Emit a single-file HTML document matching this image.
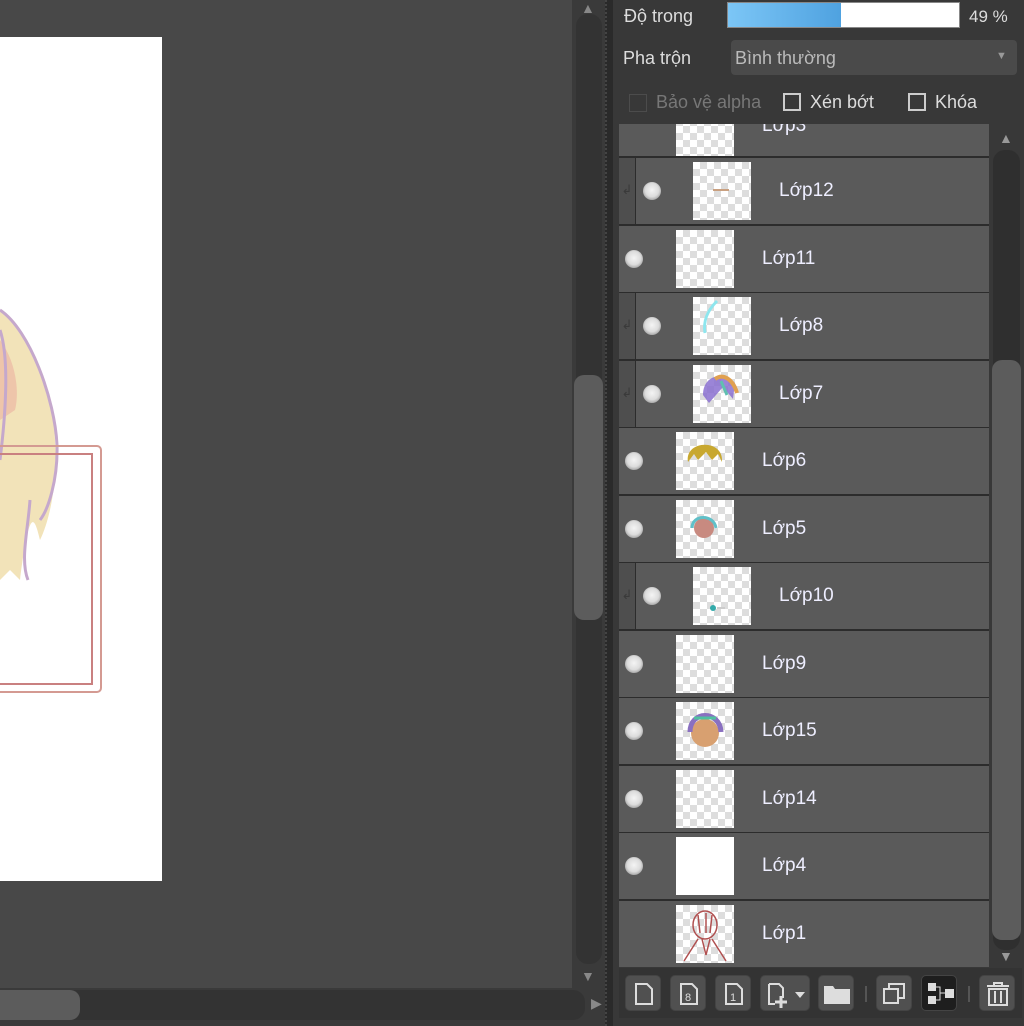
<!DOCTYPE html>
<html><head><meta charset="utf-8"><style>
*{margin:0;padding:0;box-sizing:border-box}
body{width:1024px;height:1026px;overflow:hidden;background:#2f2f2f;font-family:"Liberation Sans","DejaVu Sans",sans-serif;position:relative}
.a{position:absolute}
.row{position:absolute;left:619px;width:370px;height:66px;background:#5a5a5a}
.row .eye{position:absolute;left:7px;top:24px;width:18px;height:18px;border-radius:50%;background:radial-gradient(circle at 50% 45%,#f4f4f4 0,#dcdcdc 50%,#a0a0a0 78%,#5a5a5a 100%)}
.row .th{position:absolute;left:57px;top:4px;width:58px;height:58px;background-color:#fff;background-image:linear-gradient(45deg,#ddd 25%,transparent 25%,transparent 75%,#ddd 75%),linear-gradient(45deg,#ddd 25%,transparent 25%,transparent 75%,#ddd 75%);background-size:14px 14px;background-position:0 0,7px 7px}
.row .tx{position:absolute;left:143px;top:22px;color:#eef;font-size:19px}
.row.in{left:636px;width:353px}
.strip{position:absolute;left:619px;width:16px;height:66px;background:#4e4e4e;color:#3a3a3a;font-size:13px;text-align:center;padding-top:24px}
.btn{position:absolute;top:975px;width:36px;height:36px;border-radius:5px;background:#505050;border:1px solid #444}
</style></head><body>
<div class="a" style="left:0;top:0;width:572px;height:988px;background:#484848"></div>
<div class="a" style="left:0;top:37px;width:162px;height:844px;background:#fff"></div>
<svg class="a" style="left:0;top:280px" width="162" height="420">
<path d="M0 30 C30 50 55 120 55 160 C58 200 50 240 40 260 C35 240 30 220 20 300 L10 290 L0 300 Z" fill="#efdca8" opacity=".8"/>
<path d="M0 60 C15 80 20 110 15 130 L0 140 Z" fill="#ebb0a0" opacity=".6"/>
<path d="M0 30 C30 50 55 120 57 165 C58 200 48 230 40 240 M30 220 C28 250 20 280 28 300 M0 50 C10 80 5 140 0 180" stroke="#c5a8cc" stroke-width="3" fill="none"/>
<rect x="-5" y="166" width="106" height="246" rx="4" fill="none" stroke="#d49a92" stroke-width="2"/>
<rect x="-5" y="174" width="97" height="230" fill="none" stroke="#c98080" stroke-width="2"/>
</svg>
<div class="a" style="left:572px;top:0;width:33px;height:988px;background:#3a3a3a"></div>
<div class="a" style="left:576px;top:14px;width:26px;height:950px;background:#333;border-radius:12px"></div>
<div class="a" style="left:574px;top:375px;width:29px;height:245px;background:#5c5c5c;border-radius:10px"></div>
<div class="a" style="left:581px;top:0;color:#888;font-size:14px">▲</div>
<div class="a" style="left:581px;top:968px;color:#888;font-size:14px">▼</div>
<div class="a" style="left:0;top:988px;width:605px;height:38px;background:#3a3a3a"></div>
<div class="a" style="left:0;top:990px;width:585px;height:30px;background:#333;border-radius:12px"></div>
<div class="a" style="left:0;top:990px;width:80px;height:30px;background:#5c5c5c;border-radius:0 10px 10px 0"></div>
<div class="a" style="left:591px;top:995px;color:#888;font-size:14px">▶</div>
<div class="a" style="left:605px;top:0;width:8px;height:1026px;background:#2a2a2a;border-left:2px dotted #444"></div>
<div class="a" style="left:613px;top:0;width:411px;height:1026px;background:#383838"></div>
<div class="a" style="left:624px;top:6px;color:#ddd;font-size:18px">Độ trong</div>
<div class="a" style="left:727px;top:2px;width:233px;height:26px;background:#fff;border:1px solid #888"></div>
<div class="a" style="left:728px;top:3px;width:113px;height:24px;background:linear-gradient(90deg,#7cc6f6,#4fa2e0)"></div>
<div class="a" style="left:969px;top:7px;color:#ddd;font-size:17px">49 %</div>
<div class="a" style="left:623px;top:48px;color:#ddd;font-size:18px">Pha trộn</div>
<div class="a" style="left:731px;top:40px;width:286px;height:35px;background:#4a4a4a;border-radius:4px"></div>
<div class="a" style="left:735px;top:48px;color:#bbb;font-size:18px">Bình thường</div>
<div class="a" style="left:996px;top:50px;color:#999;font-size:11px">▼</div>
<div class="a" style="left:629px;top:94px;width:18px;height:18px;border:1px solid #4c4c4c"></div>
<div class="a" style="left:656px;top:92px;color:#777;font-size:18px">Bảo vệ alpha</div>
<div class="a" style="left:783px;top:93px;width:18px;height:18px;border:2px solid #ccc"></div>
<div class="a" style="left:810px;top:92px;color:#ddd;font-size:18px">Xén bớt</div>
<div class="a" style="left:908px;top:93px;width:18px;height:18px;border:2px solid #ccc"></div>
<div class="a" style="left:935px;top:92px;color:#ddd;font-size:18px">Khóa</div>
<div class="a" style="left:619px;top:124px;width:370px;height:842px;background:#2c2c2c"></div>
<div class="row" style="top:124px;height:32px;overflow:hidden"><div class="th" style="top:-26px"></div><div class="tx" style="top:-9px">Lớp3</div></div>
<div class="strip" style="top:158px">↲</div><div class="row in" style="top:158px"><div class="eye"></div><div class="th"><svg width="58" height="58"><path d="M20 28 H36" stroke="#c9a080" stroke-width="2"/></svg></div><div class="tx">Lớp12</div></div>
<div class="row" style="top:225.5px"><div class="eye" style="left:6px"></div><div class="th"></div><div class="tx">Lớp11</div></div>
<div class="strip" style="top:293px">↲</div><div class="row in" style="top:293px"><div class="eye"></div><div class="th"><svg width="58" height="58"><path d="M24 4 C14 14 10 24 12 36" stroke="#8ee6ee" stroke-width="3" fill="none"/></svg></div><div class="tx">Lớp8</div></div>
<div class="strip" style="top:360.5px">↲</div><div class="row in" style="top:360.5px"><div class="eye"></div><div class="th"><svg width="58" height="58"><path d="M10 30 C10 10 30 6 42 18 L40 34 L30 22 L16 38 Z" fill="#8a70d0" opacity=".85"/><path d="M22 14 C30 8 40 14 44 28" stroke="#e0a050" stroke-width="4" fill="none"/><path d="M28 16 L34 30" stroke="#60c0b0" stroke-width="3"/></svg></div><div class="tx">Lớp7</div></div>
<div class="row" style="top:428px"><div class="eye" style="left:6px"></div><div class="th"><svg width="58" height="58"><path d="M12 30 C8 8 48 6 46 30 L42 22 L36 28 L30 20 L22 28 L18 22 Z" fill="#c8a830"/></svg></div><div class="tx">Lớp6</div></div>
<div class="row" style="top:495.5px"><div class="eye" style="left:6px"></div><div class="th"><svg width="58" height="58"><circle cx="28" cy="28" r="10" fill="#c88a80"/><path d="M16 28 C16 14 38 14 40 28" stroke="#60c0c8" stroke-width="3" fill="none"/></svg></div><div class="tx">Lớp5</div></div>
<div class="strip" style="top:563px">↲</div><div class="row in" style="top:563px"><div class="eye"></div><div class="th"><svg width="58" height="58"><circle cx="20" cy="41" r="3" fill="#3aa"/><path d="M24 41 H32" stroke="#ccc" stroke-width="2"/></svg></div><div class="tx">Lớp10</div></div>
<div class="row" style="top:630.5px"><div class="eye" style="left:6px"></div><div class="th"></div><div class="tx">Lớp9</div></div>
<div class="row" style="top:698px"><div class="eye" style="left:6px"></div><div class="th"><svg width="58" height="58"><circle cx="29" cy="31" r="14" fill="#d8a070"/><path d="M14 30 C14 8 44 8 45 30" stroke="#8a70c0" stroke-width="5" fill="none"/><path d="M18 16 L40 16" stroke="#50c0a0" stroke-width="3"/></svg></div><div class="tx">Lớp15</div></div>
<div class="row" style="top:765.5px"><div class="eye" style="left:6px"></div><div class="th"></div><div class="tx">Lớp14</div></div>
<div class="row" style="top:833px"><div class="eye" style="left:6px"></div><div class="th" style="background:#fff"></div><div class="tx">Lớp4</div></div>
<div class="row" style="top:900.5px"><div class="th"><svg width="58" height="58"><g stroke="#b05050" fill="none" stroke-width="1.5"><ellipse cx="29" cy="20" rx="12" ry="14"/><path d="M22 10 L24 28 M30 8 L30 28 M36 10 L34 28 M22 34 L8 56 M36 34 L50 56 M26 34 L30 50 L34 34"/></g></svg></div><div class="tx">Lớp1</div></div>
<div class="a" style="left:990px;top:124px;width:32px;height:842px;background:#383838"></div>
<div class="a" style="left:993px;top:150px;width:27px;height:800px;background:#2f2f2f;border-radius:12px"></div>
<div class="a" style="left:992px;top:360px;width:29px;height:580px;background:#5c5c5c;border-radius:10px"></div>
<div class="a" style="left:999px;top:130px;color:#999;font-size:14px">▲</div>
<div class="a" style="left:999px;top:948px;color:#999;font-size:14px">▼</div>
<div class="a" style="left:619px;top:968px;width:403px;height:50px;background:#333"></div>
<div class="btn" style="left:625px"><svg width="36" height="36"><path d="M10 8 H21 L26 13 V28 H10 Z" fill="none" stroke="#ddd" stroke-width="2"/></svg></div>
<div class="btn" style="left:670px"><svg width="36" height="36"><path d="M10 8 H21 L26 13 V28 H10 Z" fill="none" stroke="#ddd" stroke-width="2"/><text x="14" y="25" font-size="11" fill="#ddd" font-family="Liberation Sans">8</text></svg></div>
<div class="btn" style="left:715px"><svg width="36" height="36"><path d="M10 8 H21 L26 13 V28 H10 Z" fill="none" stroke="#ddd" stroke-width="2"/><text x="14" y="25" font-size="11" fill="#ddd" font-family="Liberation Sans">1</text></svg></div>
<div class="btn" style="left:760px;width:50px"><svg width="50" height="36"><path d="M8 8 H18 L22 12 V22 M8 8 V28 H14" fill="none" stroke="#ddd" stroke-width="2"/><path d="M20 20 V32 M14 26 H26" stroke="#ddd" stroke-width="3"/><path d="M34 16 H44 L39 22 Z" fill="#ddd"/></svg></div>
<div class="btn" style="left:818px"><svg width="36" height="36"><path d="M5 10 H14 L16 13 H31 V28 H5 Z" fill="#ddd"/></svg></div>
<div class="a" style="left:865px;top:986px;width:2px;height:16px;background:#555"></div>
<div class="btn" style="left:876px"><svg width="36" height="36"><rect x="7" y="13" width="14" height="14" fill="none" stroke="#ddd" stroke-width="2"/><path d="M12 13 V8 H27 V22 H21" fill="none" stroke="#ddd" stroke-width="2"/></svg></div>
<div class="btn" style="left:921px;background:#1e1e1e"><svg width="36" height="36"><rect x="6" y="7" width="8" height="8" fill="#ddd"/><rect x="6" y="20" width="8" height="8" fill="#ddd"/><rect x="23" y="13" width="9" height="9" fill="#ddd"/><path d="M14 11 H18 V24 H14 M18 17 H23" stroke="#ddd" fill="none"/></svg></div>
<div class="a" style="left:968px;top:986px;width:2px;height:16px;background:#555"></div>
<div class="btn" style="left:979px"><svg width="36" height="36"><path d="M7 10 H29 M14 10 V7 H22 V10" stroke="#ddd" stroke-width="2" fill="none"/><rect x="9" y="13" width="18" height="16" fill="none" stroke="#ddd" stroke-width="2"/><path d="M15 15 V27 M21 15 V27" stroke="#ddd" stroke-width="2"/></svg></div>
</body></html>
